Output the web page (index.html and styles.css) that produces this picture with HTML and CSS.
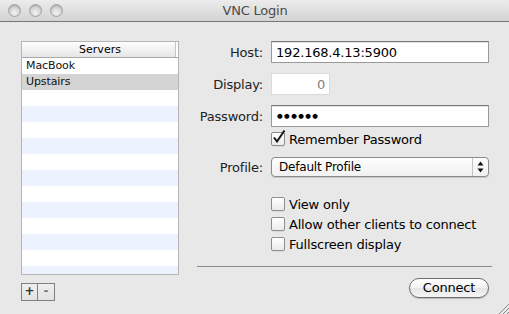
FILE: index.html
```html
<!DOCTYPE html>
<html>
	<head>
		<meta charset="utf-8" />
		<title>VNC Login</title>
		<link rel="stylesheet" href="styles.css">
	</head>

	<body>
		<div class="window">
			<div class="titlebar">
				<div class="lights">
					<span class="light"></span>
					<span class="light"></span>
					<span class="light"></span>
				</div>
				<div class="title">VNC Login</div>
			</div>

			<div class="content">
				<div class="sidebar">
					<div class="list">
						<div class="list-head">Servers</div>
						<div class="list-body">
							<div class="item">MacBook</div>
							<div class="item selected">Upstairs</div>
						</div>
					</div>
					<div class="tools">
						<a class="tool">+</a><a class="tool">-</a>
					</div>
				</div>

				<div class="form">
					<div class="row">
						<label class="label">Host:</label>
						<div class="field wide">192.168.4.13:5900</div>
					</div>
					<div class="row gap">
						<label class="label">Display:</label>
						<div class="field short">0</div>
					</div>
					<div class="row gap">
						<label class="label">Password:</label>
						<div class="field wide dots">&#9679;&#9679;&#9679;&#9679;&#9679;&#9679;</div>
					</div>
					<div class="check remember">
						<span class="box">
							<svg width="16" height="16" viewBox="0 0 16 16">
								<path d="M3 7.5 L6 11.5 L13.5 0.5" fill="none" stroke="#1a1a1a" stroke-width="2" />
							</svg>
						</span>
						<span class="check-text">Remember Password</span>
					</div>
					<div class="row profile">
						<label class="label">Profile:</label>
						<div class="popup">
							<span class="popup-text">Default Profile</span>
							<span class="arrows">
								<svg width="7" height="12" viewBox="0 0 7 12">
									<path d="M3.5 0.5 L6.5 4.5 L0.5 4.5 Z" fill="#111" />
									<path d="M0.5 7.5 L6.5 7.5 L3.5 11.5 Z" fill="#111" />
								</svg>
							</span>
						</div>
					</div>
					<div class="options">
						<div class="check"><span class="box"></span><span class="check-text">View only</span></div>
						<div class="check"><span class="box"></span><span class="check-text">Allow other clients to connect</span></div>
						<div class="check"><span class="box"></span><span class="check-text">Fullscreen display</span></div>
					</div>
					<div class="separator"></div>
					<div class="actions">
						<a class="button">Connect</a>
					</div>
				</div>
			</div>

			<svg class="grip" width="11" height="11" viewBox="0 0 11 11">
				<path d="M1 11 L11 1 M5 11 L11 5 M9 11 L11 9" stroke="#8a8a8a" stroke-width="1" />
			</svg>
		</div>
	</body>

</html>
```

FILE: styles.css
```css
body {
	margin: 0;
	padding: 0;
	background: #e8e8e8;
}

.window {
	position: relative;
	width: 509px;
	height: 314px;
	display: flex;
	flex-direction: column;
	background: #e8e8e8;
	font-family: "DejaVu Sans", sans-serif;
	font-size: 13px;
	letter-spacing: -0.2px;
	color: #000;
	overflow: hidden;
	border-radius: 4px 4px 0 0;
}

/* title bar */
.titlebar {
	height: 21px;
	border-bottom: 1px solid #777;
	background: linear-gradient(#ececec, #d3d3d3);
	display: flex;
	align-items: center;
	position: relative;
}

.lights {
	display: flex;
	gap: 8px;
	padding-left: 8px;
}

.light {
	width: 11px;
	height: 11px;
	border-radius: 50%;
	border: 1px solid #a3a3a3;
	background: radial-gradient(circle at 50% 70%, #f4f4f4, #d0d0d0 60%, #bcbcbc);
	box-shadow: inset 0 1px 1px rgba(0, 0, 0, 0.15);
}

.title {
	flex: 1;
	text-align: center;
	color: #4a4a4a;
	margin-right: 64px;
	margin-left: 2px;
}

.content {
	flex: 1;
	display: flex;
}

/* server list */
.sidebar {
	padding: 19px 0 0 21px;
	width: 158px;
}

.list {
	height: 232px;
	border: 1px solid #b5b5b5;
	background: #fff;
	display: flex;
	flex-direction: column;
}

.list-head {
	height: 15px;
	line-height: 15px;
	border-bottom: 1px solid #a9a9a9;
	background: linear-gradient(#fdfdfd, #e6e6e6);
	text-align: center;
	font-size: 11px;
	letter-spacing: 0;
	box-shadow: inset -2px 0 0 #fff, inset -3px 0 0 #c4c4c4;
}

.list-body {
	flex: 1;
	background: repeating-linear-gradient(#fff 0 16px, #edf3fe 16px 32px);
}

.item {
	height: 16px;
	line-height: 16px;
	padding-left: 4px;
	font-size: 11px;
	letter-spacing: -0.1px;
	color: #111;
}

.item.selected {
	background: #d4d4d4;
}

.tools {
	display: flex;
	margin-top: 8px;
}

.tool {
	width: 15px;
	height: 16px;
	line-height: 15px;
	border: 1px solid #808080;
	background: linear-gradient(#efefef, #e2e2e2);
	text-align: center;
	font-size: 12px;
	font-weight: bold;
	color: #333;
}

.tool + .tool {
	border-left: none;
	width: 16px;
	color: #777;
}

/* form */
.form {
	margin-left: 18px;
	width: 295px;
	padding-top: 19px;
	display: flex;
	flex-direction: column;
}

.row {
	display: flex;
	align-items: center;
}

.row.gap {
	margin-top: 10px;
}

.label {
	width: 66px;
	margin-right: 8px;
	text-align: right;
	color: #222;
}

.field {
	height: 20px;
	line-height: 21px;
	border: 1px solid #999;
	border-top-color: #7a7a7a;
	background: #fff;
	padding: 0 4px;
	box-sizing: content-box;
	box-shadow: inset 0 1px 0 #e2e2e2;
}

.field.wide {
	width: 208px;
}

.field.short {
	width: 49px;
	text-align: right;
	color: #808080;
	border-color: #dadada;
	box-shadow: none;
}

.field.dots {
	font-size: 6.5px;
	line-height: 20px;
	letter-spacing: 1.4px;
	padding-left: 5px;
	width: 207px;
}

.check {
	display: flex;
	align-items: center;
	height: 14px;
	margin-left: 74px;
}

.box {
	width: 12px;
	height: 12px;
	border: 1px solid #8e8e8e;
	border-radius: 2px;
	background: linear-gradient(#fff, #ececec);
	box-shadow: 0 1px 0 rgba(0, 0, 0, 0.06);
	position: relative;
	margin-right: 4px;
}

.box svg {
	position: absolute;
	left: -1px;
	top: -3px;
}

.remember {
	margin-top: 5px;
}

.profile {
	margin-top: 11px;
}

.popup {
	width: 216px;
	height: 18px;
	border: 1px solid #8a8a8a;
	border-radius: 4px;
	background: linear-gradient(#fefefe, #f1f1f1);
	box-shadow: 0 1px 1px rgba(0, 0, 0, 0.15);
	display: flex;
	align-items: center;
}

.popup-text {
	flex: 1;
	padding-left: 7px;
	font-size: 12px;
}

.arrows {
	width: 15px;
	height: 18px;
	border-left: 1px solid #c4c4c4;
	display: flex;
	align-items: center;
	justify-content: center;
}

.options {
	margin-top: 20px;
	display: flex;
	flex-direction: column;
	gap: 6px;
}

.separator {
	margin-top: 15px;
	height: 1px;
	background: #8c8c8c;
}

.actions {
	display: flex;
	justify-content: flex-end;
	margin-top: 11px;
	padding-right: 3px;
}

.button {
	width: 78px;
	height: 18px;
	line-height: 18px;
	border: 1px solid #6e6e6e;
	border-radius: 10px;
	background: linear-gradient(#ffffff, #f1f1f1 50%, #e4e4e4 51%, #f6f6f6);
	box-shadow: 0 1px 1px rgba(0, 0, 0, 0.2);
	text-align: center;
}

.grip {
	position: absolute;
	right: 0;
	bottom: 0;
}
```
